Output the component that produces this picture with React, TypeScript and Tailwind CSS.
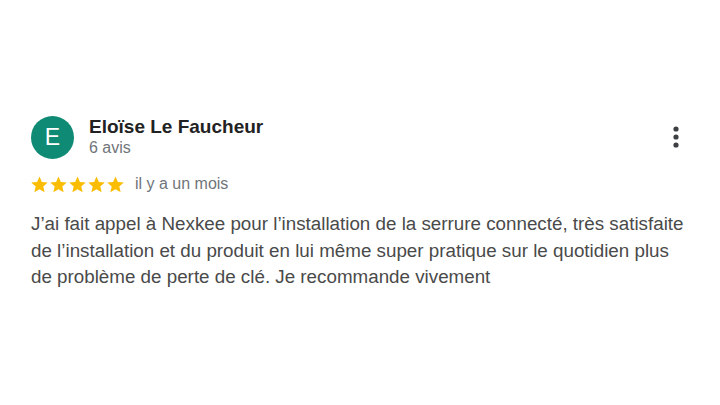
function Star() {
  return (
    <svg width="19" height="19" viewBox="0 0 24 24" className="shrink-0">
      <path
        d="M12 2l3 6.8 7.4.7-5.6 4.9 1.7 7.3L12 17.9l-6.5 3.8 1.7-7.3L1.6 9.5 9 8.8z"
        fill="#fbbc04"
      />
    </svg>
  );
}

function Dots() {
  return (
    <svg width="8" height="24" viewBox="0 0 8 24">
      <circle cx="4" cy="4" r="2.6" fill="#3c4043" />
      <circle cx="4" cy="12" r="2.6" fill="#3c4043" />
      <circle cx="4" cy="20" r="2.6" fill="#3c4043" />
    </svg>
  );
}

export default function App() {
  return (
    <div
      className="w-[720px] h-[405px] bg-white overflow-hidden"
      style={{ fontFamily: '"Liberation Sans", Arial, sans-serif' }}
    >
      <div className="pt-[116px] pl-[31px] pr-[30px]">
        {/* Header */}
        <div className="flex items-start">
          <div className="w-[43px] h-[43px] rounded-full bg-[#0f8a74] flex items-center justify-center text-white text-[23px] font-light shrink-0">
            E
          </div>
          <div className="ml-[15px] flex-1">
            <p className="text-[19px] leading-[22px] font-bold text-[#222]">
              Eloïse Le Faucheur
            </p>
            <p className="text-[16px] leading-[20px] text-[#70757a]">6 avis</p>
          </div>
          <div className="mt-[9px] mr-[10px]">
            <Dots />
          </div>
        </div>

        {/* Rating */}
        <div className="flex items-center mt-[15px]">
          <div className="flex -ml-[1px]">
            <Star />
            <Star />
            <Star />
            <Star />
            <Star />
          </div>
          <span className="ml-[10px] text-[16px] text-[#70757a] leading-[20px]">
            il y a un mois
          </span>
        </div>

        {/* Body */}
        <p className="mt-[17px] text-[18.8px] leading-[26.5px] text-[#4a4a4a] whitespace-nowrap">
          J’ai fait appel à Nexkee pour l’installation de la serrure connecté, très satisfaite
          <br />
          de l’installation et du produit en lui même super pratique sur le quotidien plus
          <br />
          de problème de perte de clé. Je recommande vivement
        </p>
      </div>
    </div>
  );
}
